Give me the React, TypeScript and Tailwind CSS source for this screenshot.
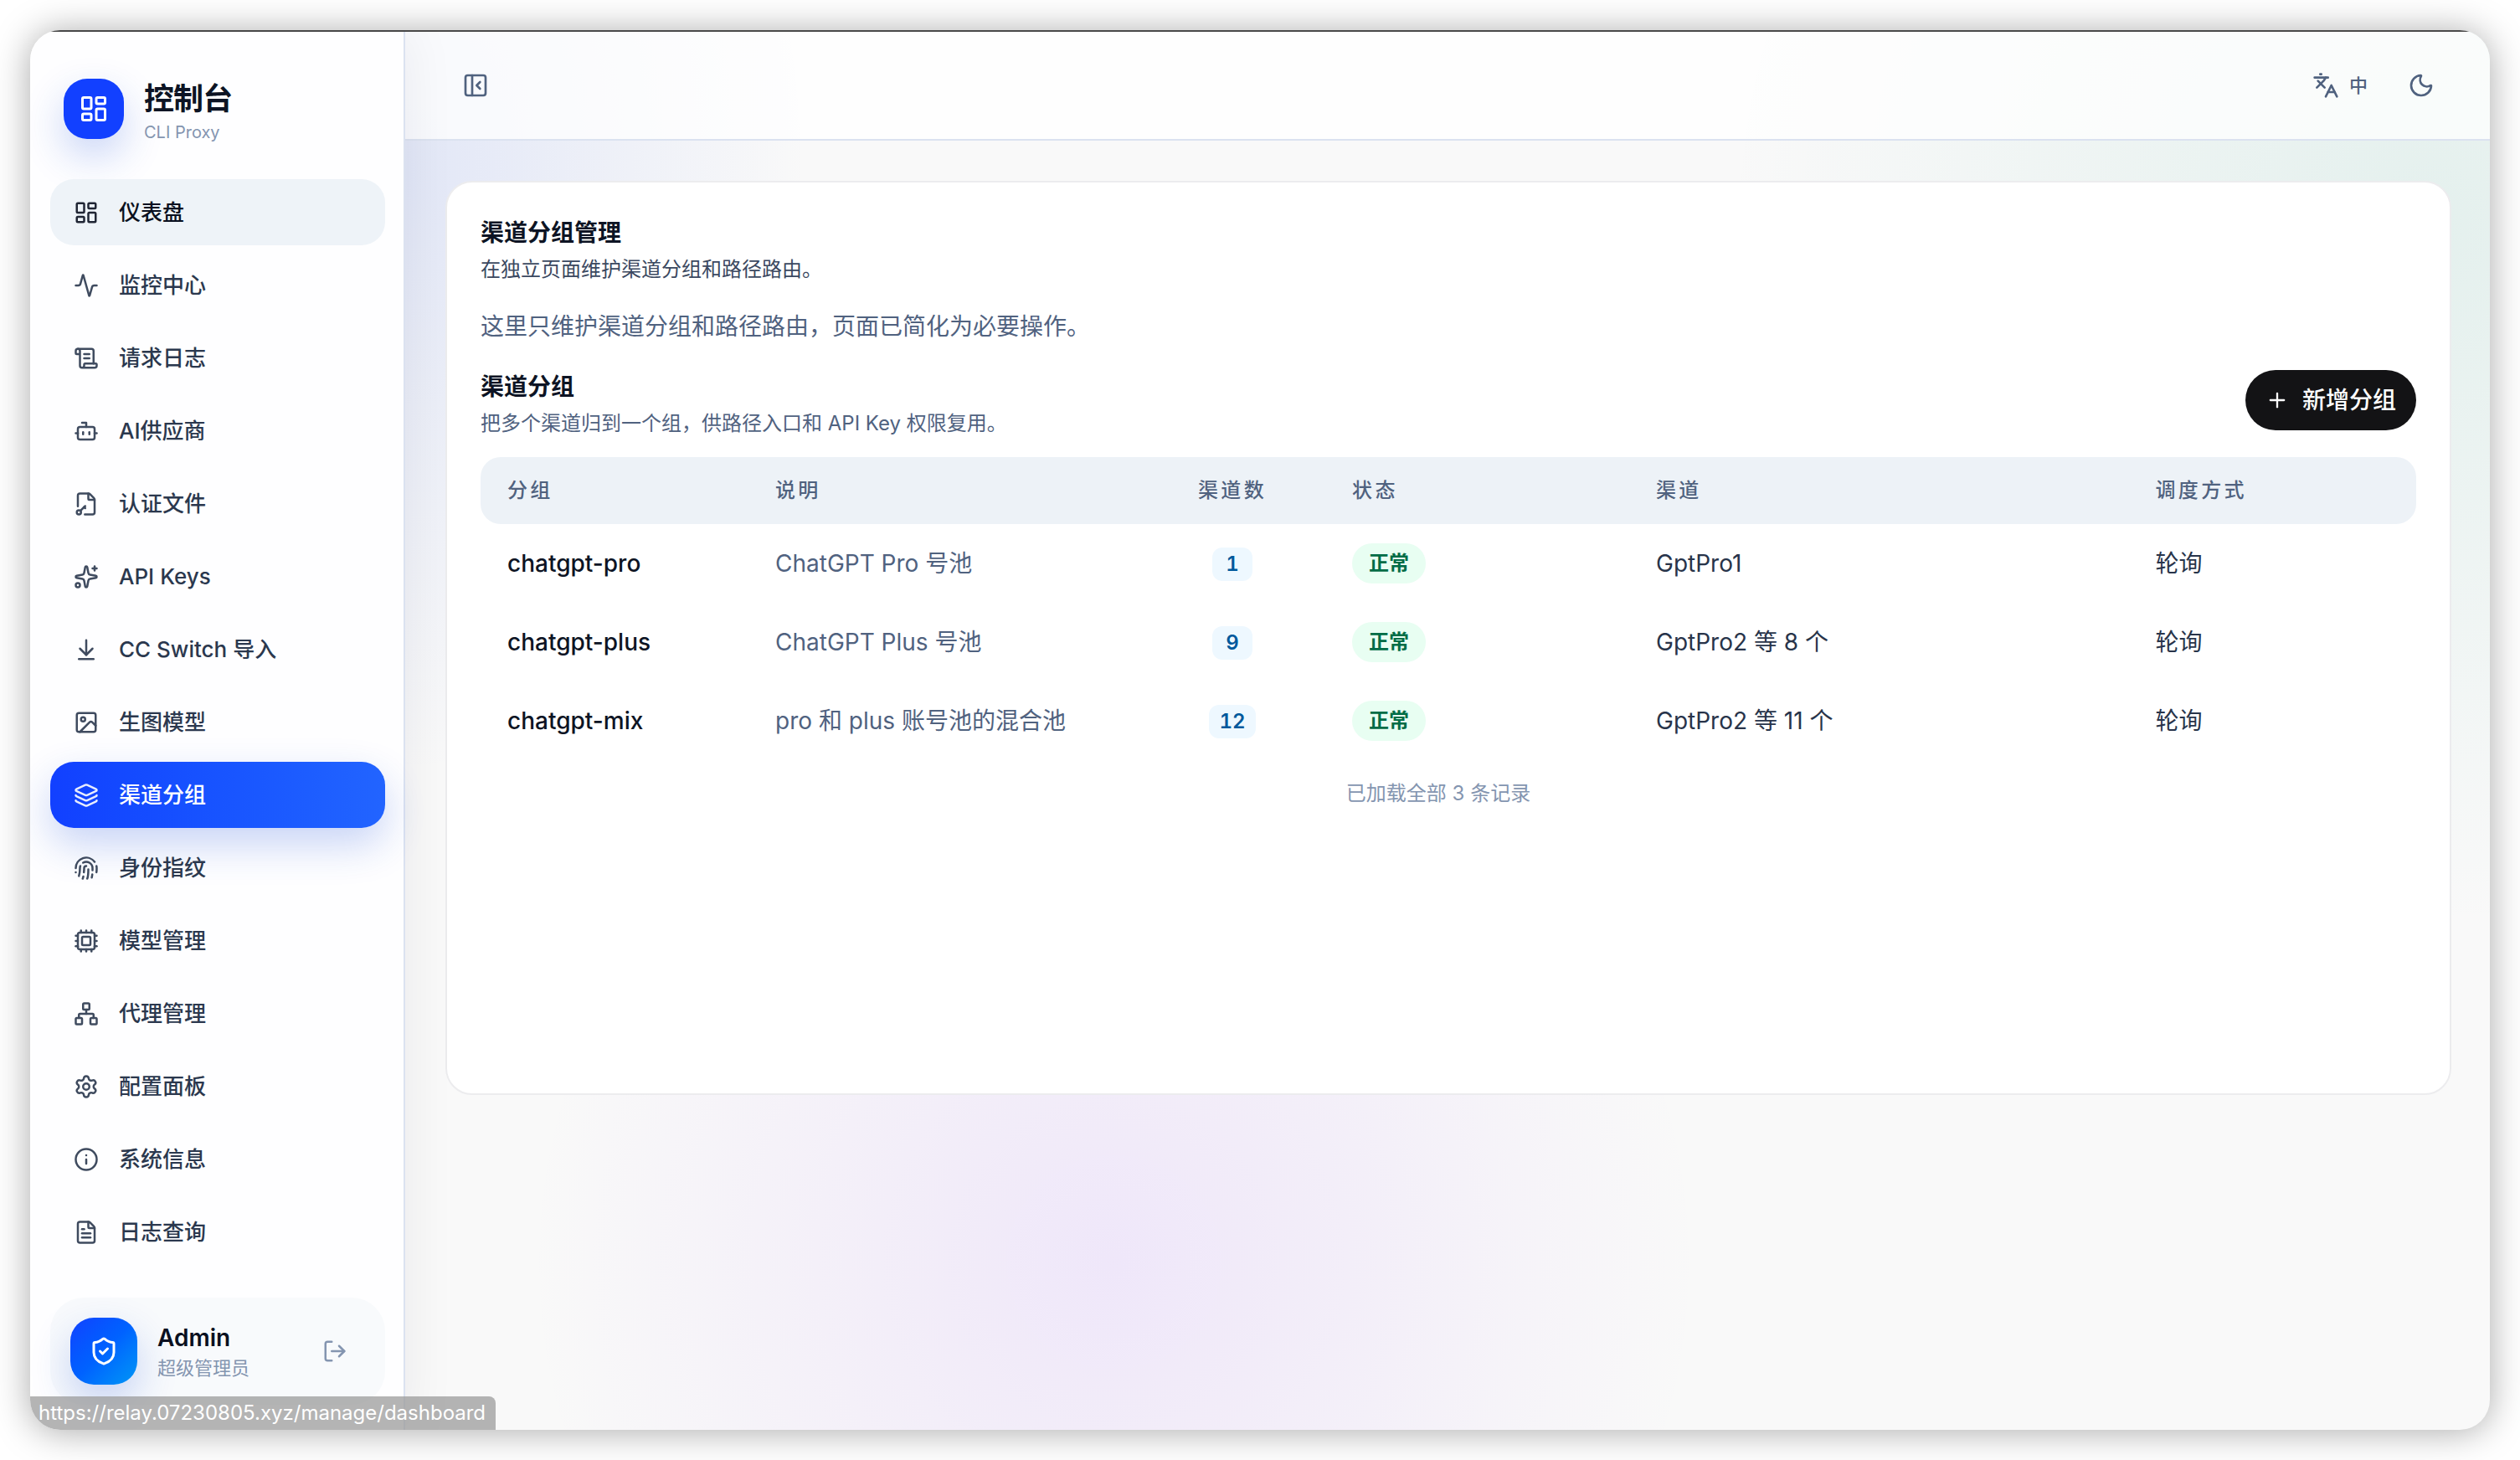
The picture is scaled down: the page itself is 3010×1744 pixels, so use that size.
import {
  Activity,
  ArrowDownToLine,
  Bot,
  Cpu,
  FileKey2,
  FileText,
  Fingerprint,
  Image as ImageIcon,
  Info,
  Languages,
  Layers,
  LayoutDashboard,
  LogOut,
  Moon,
  Network,
  PanelLeftClose,
  Plus,
  ScrollText,
  Settings,
  ShieldCheck,
  Sparkles,
  type LucideIcon,
} from "lucide-react";

type NavItem = { label: string; icon: LucideIcon; state?: "hover" | "active" };

const navItems: NavItem[] = [
  { label: "仪表盘", icon: LayoutDashboard, state: "hover" },
  { label: "监控中心", icon: Activity },
  { label: "请求日志", icon: ScrollText },
  { label: "AI供应商", icon: Bot },
  { label: "认证文件", icon: FileKey2 },
  { label: "API Keys", icon: Sparkles },
  { label: "CC Switch 导入", icon: ArrowDownToLine },
  { label: "生图模型", icon: ImageIcon },
  { label: "渠道分组", icon: Layers, state: "active" },
  { label: "身份指纹", icon: Fingerprint },
  { label: "模型管理", icon: Cpu },
  { label: "代理管理", icon: Network },
  { label: "配置面板", icon: Settings },
  { label: "系统信息", icon: Info },
  { label: "日志查询", icon: FileText },
];

const groups = [
  { name: "chatgpt-pro", desc: "ChatGPT Pro 号池", count: 1, channels: "GptPro1" },
  { name: "chatgpt-plus", desc: "ChatGPT Plus 号池", count: 9, channels: "GptPro2 等 8 个" },
  { name: "chatgpt-mix", desc: "pro 和 plus 账号池的混合池", count: 12, channels: "GptPro2 等 11 个" },
];

function navClass(state?: NavItem["state"]) {
  if (state === "active")
    return "bg-linear-to-r from-[#1240ff] to-[#2264ff] text-white shadow-[0_20px_48px_rgba(29,78,216,0.24)]";
  if (state === "hover") return "bg-[#eef3f8] text-[#0a1020]";
  return "text-[#2b384e]";
}

function Sidebar() {
  return (
    <aside className="z-10 flex w-112 shrink-0 flex-col border-r-2 border-[#dbe2f0] bg-[#fefeff] shadow-[0_0_60px_rgba(15,23,42,0.07)]">
      <div className="flex items-start gap-6 px-10 pt-14">
        <span className="flex size-18 items-center justify-center rounded-[28px] bg-[#1240ff] text-white shadow-[0_20px_48px_rgba(29,78,216,0.24)]">
          <LayoutDashboard size={36} />
        </span>
        <div>
          <div className="text-[36px] leading-[48px] font-bold tracking-tight text-[#0d1424]">控制台</div>
          <div className="text-[20px] leading-[32px] text-[#8495b0]">CLI Proxy</div>
        </div>
      </div>
      <nav className="mt-10 flex flex-1 flex-col gap-2 pr-[22px] pl-6">
        {navItems.map(({ label, icon: Icon, state }) => (
          <a
            key={label}
            href="#"
            className={`flex items-center gap-6 rounded-[28px] px-7 py-5 text-[26px] leading-[39px] font-medium ${navClass(state)}`}
          >
            <Icon size={30} className="shrink-0 opacity-90" />
            {label}
          </a>
        ))}
      </nav>
      <div className="mr-[22px] mb-[30px] ml-6 flex items-center gap-6 rounded-[40px] bg-[#f8fafc] p-6">
        <span className="flex size-20 items-center justify-center rounded-[28px] bg-linear-to-br from-[#1240ff] via-[#0062ff] to-[#0096f5] text-white shadow-[0_20px_48px_rgba(29,78,216,0.24)]">
          <ShieldCheck size={36} />
        </span>
        <div className="flex-1 pt-1">
          <div className="text-[28px] leading-[36px] font-semibold text-[#0a1020]">Admin</div>
          <div className="text-[22px] leading-[36px] text-[#8495b0]">超级管理员</div>
        </div>
        <button type="button" aria-label="退出登录" className="flex size-18 items-center justify-center text-[#8495b0]">
          <LogOut size={30} />
        </button>
      </div>
    </aside>
  );
}

function TopBar() {
  return (
    <header className="flex h-[130px] shrink-0 items-center justify-between border-b-2 border-[#dbe2f0] bg-white/75 pr-[46px] pl-12 text-[#50627f]">
      <button type="button" aria-label="收起侧栏" className="flex size-18 items-center justify-center">
        <PanelLeftClose size={32} />
      </button>
      <div className="flex items-center gap-2">
        <button type="button" className="flex h-18 items-center gap-3 px-5 text-[22px] font-medium">
          <Languages size={32} />
          中
        </button>
        <button type="button" aria-label="切换主题" className="flex size-18 items-center justify-center">
          <Moon size={32} />
        </button>
      </div>
    </header>
  );
}

function GroupTable() {
  return (
    <table className="mt-6 w-full table-fixed border-separate border-spacing-0 text-left text-[28px] leading-[40px]">
      <colgroup>
        <col className="w-[320px]" />
        <col className="w-[20.2%]" />
        <col className="w-[222px]" />
        <col className="w-[15.7%]" />
        <col className="w-[25.8%]" />
        <col />
      </colgroup>
      <thead>
        <tr className="h-20 text-[24px] tracking-[0.14em] text-[#50627f] *:bg-[#edf2f7] *:px-8 *:font-medium">
          <th className="rounded-l-[24px]">分组</th>
          <th>说明</th>
          <th className="text-center">渠道数</th>
          <th>状态</th>
          <th>渠道</th>
          <th className="rounded-r-[24px]">调度方式</th>
        </tr>
      </thead>
      <tbody>
        {groups.map((g) => (
          <tr key={g.name} className="h-[94px] text-[#28344a] *:px-8">
            <td className="font-medium text-[#0d1424]">{g.name}</td>
            <td className="text-[#50627f]">{g.desc}</td>
            <td className="text-center">
              <span className="inline-flex h-10 min-w-12 items-center justify-center rounded-xl bg-[#eef8ff] px-3 align-middle text-[24px] font-semibold text-[#00599c] tabular-nums">
                {g.count}
              </span>
            </td>
            <td>
              <span className="inline-flex h-12 items-center rounded-full bg-[#e8fef2] px-5 align-middle text-[24px] font-semibold text-[#006c46]">
                正常
              </span>
            </td>
            <td>{g.channels}</td>
            <td>轮询</td>
          </tr>
        ))}
      </tbody>
    </table>
  );
}

export default function App() {
  return (
    <div className="flex h-screen bg-white p-9 font-['Inter','Noto_Sans_CJK_SC',sans-serif]">
      <div className="relative flex flex-1 flex-col overflow-hidden rounded-[36px] bg-[#f9f9f9] shadow-[0_2px_44px_rgba(0,0,0,0.34)]">
        <div className="h-0.5 shrink-0 bg-[#4a4a4a]" />
        <div className="flex min-h-0 flex-1">
          <Sidebar />
          <div className="flex min-w-0 flex-1 flex-col bg-[radial-gradient(ellipse_480px_720px_at_0%_10%,rgba(60,100,230,0.12),transparent),radial-gradient(circle_at_97%_14%,rgba(16,150,120,0.09),transparent_840px),radial-gradient(circle_at_34%_88%,rgba(150,70,255,0.1),transparent_700px)]">
            <TopBar />
            <main className="flex-1 pt-12 pr-[46px] pl-12">
              <section className="min-h-[1092px] rounded-[32px] border-2 border-[#ececee] bg-white p-10">
                <h1 className="text-[28px] leading-[40px] font-semibold text-[#0d1424]">渠道分组管理</h1>
                <p className="mt-2 text-[24px] leading-[32px] text-[#3b4860]">在独立页面维护渠道分组和路径路由。</p>
                <p className="mt-8 text-[28px] leading-[40px] text-[#50627f]">
                  这里只维护渠道分组和路径路由，页面已简化为必要操作。
                </p>
                <div className="mt-8 flex items-start justify-between">
                  <div>
                    <h2 className="text-[28px] leading-[40px] font-semibold text-[#0d1424]">渠道分组</h2>
                    <p className="mt-2 text-[24px] leading-[32px] text-[#50627f]">
                      把多个渠道归到一个组，供路径入口和 API Key 权限复用。
                    </p>
                  </div>
                  <button
                    type="button"
                    className="flex h-18 items-center gap-4 rounded-full bg-[#131315] px-6 text-[28px] font-medium text-white"
                  >
                    <Plus size={28} />
                    新增分组
                  </button>
                </div>
                <GroupTable />
                <p className="mt-6 pr-6 text-center text-[24px] leading-[32px] text-[#8495b0]">已加载全部 3 条记录</p>
              </section>
            </main>
          </div>
        </div>
        <div className="absolute bottom-0 left-0 z-20 flex h-10 items-center rounded-tr-lg bg-[#9b9b9b]/75 pr-3 pl-[10px] text-[24px] text-white">
          https://relay.07230805.xyz/manage/dashboard
        </div>
      </div>
    </div>
  );
}
